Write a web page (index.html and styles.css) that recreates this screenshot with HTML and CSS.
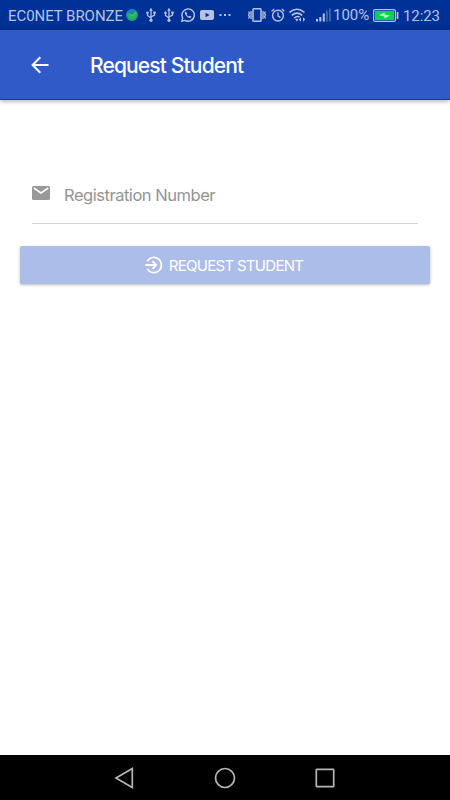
FILE: index.html
```html
<!DOCTYPE html>
<html lang="en">
<head>
    <meta charset="UTF-8">
    <meta name="viewport" content="width=device-width, initial-scale=1.0">
    <title>Request Student</title>
    <link rel="stylesheet" href="styles.css">
</head>
<body>
    <div class="status-bar">
        <div class="status-left">
            <span class="carrier">EC0NET BRONZE</span>
            <svg class="globe" width="12" height="12" viewBox="0 0 12 12">
                <circle cx="6" cy="6" r="6" fill="#1688b8"/>
                <path d="M.5 5 3.500 4.500 6 6 9.500 2l2 3.500L10 9.500 7 11.500 3 10.500z" fill="#22b455"/>
                <path d="M3.500 5l3 2 4-4" fill="none" stroke="#61cf4c"/>
            </svg>
            <svg class="usb" width="10" height="16" viewBox="0 0 10 16">
                <path d="M5 3v10M1.500 5.500v3L5 11M8.500 5v3L5 10" fill="none" stroke="currentColor" stroke-width="1.300"/>
                <path d="M5 .8 3.200 3.800h3.600zM7.300 4.500h2.400v2.200H7.300z" fill="currentColor"/>
                <circle cx="1.500" cy="5.800" r="1.300" fill="currentColor"/>
                <circle cx="5" cy="13.300" r="1.600" fill="currentColor"/>
            </svg>
            <svg class="usb second" width="10" height="16" viewBox="0 0 10 16">
                <path d="M5 3v10M1.500 5.500v3L5 11M8.500 5v3L5 10" fill="none" stroke="currentColor" stroke-width="1.300"/>
                <path d="M5 .8 3.200 3.800h3.600zM7.300 4.500h2.400v2.200H7.300z" fill="currentColor"/>
                <circle cx="1.500" cy="5.800" r="1.300" fill="currentColor"/>
                <circle cx="5" cy="13.300" r="1.600" fill="currentColor"/>
            </svg>
            <svg class="whatsapp" width="14" height="14" viewBox="0 0 14 14">
                <path d="M.8 13.200l.9-3.200A6.200 6.200 0 1 1 4 12.400z" fill="none" stroke="currentColor" stroke-width="1.400"/>
                <path d="M4.600 3.600c-1 .6-1 1.800-.3 3 .9 1.600 2.200 2.900 3.900 3.400 1.200.3 2.100-.3 2.300-1.400L8.800 7.700l-.9.900C6.900 8.200 6.100 7.400 5.600 6.400l.7-.9z" fill="currentColor"/>
            </svg>
            <svg class="youtube" width="14" height="10" viewBox="0 0 14 10">
                <path fill-rule="evenodd" d="M2 0h10q2 0 2 2v6q0 2-2 2H2q-2 0-2-2V2q0-2 2-2zm3.600 2.700v4.600L9.600 5z" fill="currentColor"/>
            </svg>
            <svg class="dots" width="12" height="2" viewBox="0 0 12 2">
                <path d="M.5 0h2v2h-2zM5 0h2v2H5zM9.500 0h2v2h-2z" fill="currentColor"/>
            </svg>
        </div>
        <div class="status-right">
            <svg width="18" height="14" viewBox="0 0 18 14">
                <rect x="5" y=".8" width="8" height="12.400" rx=".8" fill="none" stroke="currentColor" stroke-width="1.500"/>
                <path d="M3 3v8M15 3v8M.5 3.500l1 1.500-1 2 1 1.500-1 2M17.500 3.500l-1 1.500 1 2-1 1.500 1 2" fill="none" stroke="currentColor" stroke-width="1.300"/>
            </svg>
            <svg class="alarm" width="14" height="14" viewBox="0 0 14 14">
                <circle cx="7" cy="7.600" r="5.400" fill="none" stroke="currentColor" stroke-width="1.400"/>
                <path d="M7 4.300v3.500l2.500 1.800M.6 3.200 3.300.9M13.400 3.200 10.700.9" fill="none" stroke="currentColor" stroke-width="1.300"/>
            </svg>
            <svg class="wifi" width="18" height="14" viewBox="0 0 18 14">
                <path d="M.5 4.500Q8-2 15.500 4.500M2.800 7.400Q8 3 13.200 7.400M5.200 10.100Q8 7.500 10.500 9" fill="none" stroke="currentColor" stroke-width="1.600"/>
                <path d="M8 13.600 6.100 11.300q1.900-1.300 3.200 0zM9.800 11.500l2.200-2.200v4.400zM16.200 11.500l-2.200-2.200v4.400z" fill="currentColor"/>
            </svg>
            <svg class="signal" width="15" height="14" viewBox="0 0 15 14">
                <path d="M0 11h2v2.500H0zM3.300 9h2v4.500h-2zM6.800 5.500h2v8h-2z" fill="currentColor"/>
                <path d="M10 2.500h1.800v11H10zM13 .5h1.800v13H13z" fill="#4264b8"/>
            </svg>
            <span class="percent">100%</span>
            <svg class="battery" width="26" height="13" viewBox="0 0 26 13">
                <rect x=".6" y=".6" width="21.800" height="11.800" rx="1.500" fill="none" stroke="currentColor" stroke-width="1.200"/>
                <rect x="2" y="2" width="19" height="9" fill="#06d44f"/>
                <path d="M6 6.200 11.600 3.500v2L17 6.600l-5.500 2.900V7.400z" fill="#c9f5d8"/>
                <path d="M23.700 3h1.700v7h-1.700z" fill="currentColor"/>
            </svg>
            <span class="clock">12:23</span>
        </div>
    </div>

    <header class="toolbar">
        <svg class="back" width="18" height="18" viewBox="0 0 18 18">
            <path d="M17.500 9H2M9.300 1.300 1.600 9l7.700 7.700" fill="none" stroke="currentColor" stroke-width="2"/>
        </svg>
        <h1 class="title">Request Student</h1>
    </header>

    <main class="content">
        <label class="field">
            <svg width="18" height="14" viewBox="0 0 18 14">
                <rect width="18" height="14" rx="1.500" fill="#999"/>
                <path d="M1.800 2 9 7l7.200-5" fill="none" stroke="#fff" stroke-width="1.600"/>
            </svg>
            <span class="field-label">Registration Number</span>
        </label>
        <button class="submit" type="button" disabled>
            <svg width="18" height="18" viewBox="0 0 18 18">
                <path d="M2.300 5.200A7.600 7.600 0 1 1 2.300 12.800" fill="none" stroke="currentColor" stroke-width="1.700"/>
                <path d="M.3 9H10M7.500 5.200 11.200 9l-3.700 3.800" fill="none" stroke="currentColor" stroke-width="1.900"/>
            </svg>
            <span class="submit-text">REQUEST STUDENT</span>
        </button>
    </main>

    <nav class="nav-bar">
        <svg width="22" height="22" viewBox="0 0 22 22">
            <path d="M18.300 1.500v19L2 11z"/>
        </svg>
        <svg width="22" height="22" viewBox="0 0 22 22">
            <circle cx="11" cy="11" r="9.500"/>
        </svg>
        <svg width="22" height="22" viewBox="0 0 22 22">
            <rect x="2.300" y="2.300" width="17.400" height="17.400" rx=".5"/>
        </svg>
    </nav>
</body>
</html>
```

FILE: styles.css
```css
* {
    box-sizing: border-box;
}
body {
    margin: 0;
    height: 800px;
    display: flex;
    flex-direction: column;
    background-color: #fff;
    font-family: Inter, sans-serif;
    overflow: hidden;
}
svg {
    display: block;
    flex: none;
}
.status-bar {
    height: 30px;
    padding: 0 10px 0 8px;
    display: flex;
    justify-content: space-between;
    background-color: #003196;
    color: #b5c3e3;
    font: 15px/30px Roboto, sans-serif;
    white-space: nowrap;
}
.status-left,
.status-right {
    display: flex;
    align-items: center;
}
.carrier {
    width: 118px;
    padding-top: 1px;
    letter-spacing: -0.05px;
}
.usb {
    margin-left: 8px;
}
.whatsapp {
    margin-left: 7px;
}
.youtube {
    margin-left: 5px;
}
.dots {
    margin-left: 5px;
}
.alarm {
    margin-left: 5px;
}
.wifi {
    margin-left: 4px;
}
.signal {
    margin-left: 9px;
}
.percent {
    width: 36px;
    margin-left: 2px;
    margin-top: -1px;
}
.battery {
    margin-left: 4px;
}
.clock {
    width: 37px;
    margin-left: 4px;
    padding-top: 1px;
    letter-spacing: -0.1px;
}
.toolbar {
    height: 70px;
    padding-left: 31px;
    display: flex;
    align-items: center;
    background-color: #2f5ac7;
    border-bottom: 1px solid #0d3cae;
    box-shadow: 0 1px 5px rgba(0, 0, 0, 0.35);
    color: #fff;
}
.title {
    margin: 1px 0 0 41px;
    font-size: 21px;
    font-weight: 500;
    letter-spacing: -0.85px;
}
.content {
    flex: 1;
    padding: 70px 20px 0;
}
.field {
    height: 54px;
    margin: 0 12px 22px;
    padding-bottom: 7px;
    display: flex;
    align-items: center;
    border-bottom: 1px solid #d2d2d2;
}
.field-label {
    margin: 3px 0 0 14px;
    color: #949494;
    font-size: 16.5px;
    letter-spacing: -0.47px;
}
.submit {
    width: 100%;
    height: 38px;
    padding: 0 2px 0 0;
    display: flex;
    align-items: center;
    justify-content: center;
    gap: 6px;
    border: none;
    border-radius: 2px;
    background-color: #acbde9;
    box-shadow: 0 1px 3px rgba(0, 0, 0, 0.28);
    color: #fff;
    font: 15px Inter, sans-serif;
}
.submit-text {
    letter-spacing: -0.7px;
}
.nav-bar {
    height: 45px;
    display: flex;
    align-items: center;
    justify-content: center;
    gap: 78px;
    background-color: #000;
}
.nav-bar svg {
    fill: none;
    stroke: #b5b5b5;
    stroke-width: 1.7;
}
```
